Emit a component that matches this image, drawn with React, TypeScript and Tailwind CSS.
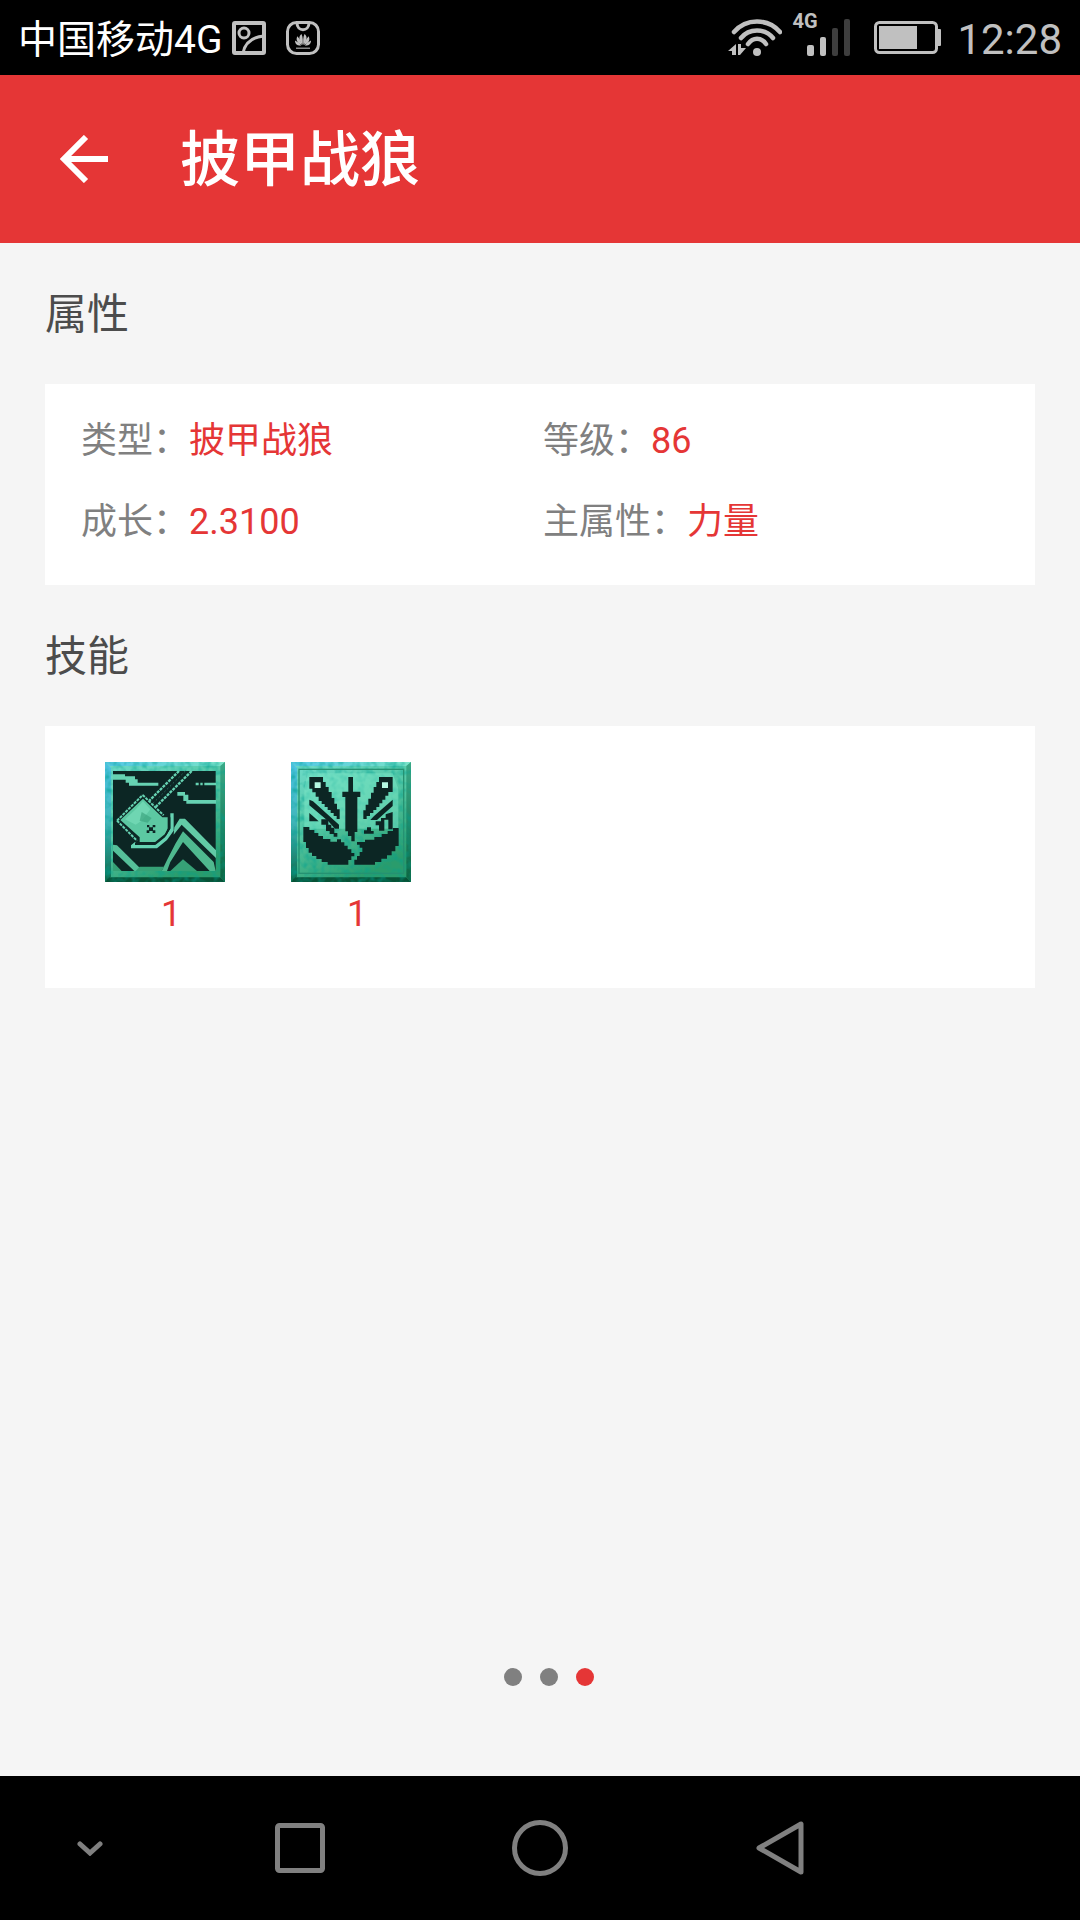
import type { ReactNode } from "react"

interface Attribute {
  label: string
  value: string
}

interface Skill {
  name: string
  level: number
  icon: ReactNode
}

const attributes: Attribute[] = [
  { label: "类型：", value: "披甲战狼" },
  { label: "等级：", value: "86" },
  { label: "成长：", value: "2.3100" },
  { label: "主属性：", value: "力量" },
]

const skills: Skill[] = [
  { name: "skill-axe", level: 1, icon: <AxeIcon /> },
  { name: "skill-blades", level: 1, icon: <BladesIcon /> },
]

const pages = [1, 2, 3]

// Stone tile behind every skill drawing: lit from the top left, bevelled edges
function StoneTile({ id }: { id: string }) {
  return (
    <>
      <defs>
        <linearGradient id={`${id}-face`} x1="0" y1="0" x2="0.5" y2="1">
          <stop offset="0" stopColor="#6fdccb" />
          <stop offset="0.5" stopColor="#55c8a5" />
          <stop offset="1" stopColor="#2a9c6c" />
        </linearGradient>
        <linearGradient id={`${id}-left`} x1="0" y1="0" x2="0" y2="1">
          <stop offset="0" stopColor="#55c6ea" />
          <stop offset="0.5" stopColor="#3fb5b8" />
          <stop offset="1" stopColor="#0c6848" />
        </linearGradient>
        <linearGradient id={`${id}-top`} x1="0" y1="0" x2="1" y2="0">
          <stop offset="0" stopColor="#56c8e6" />
          <stop offset="1" stopColor="#7be3c8" />
        </linearGradient>
        <linearGradient id={`${id}-right`} x1="0" y1="0" x2="0" y2="1">
          <stop offset="0" stopColor="#3aa987" />
          <stop offset="1" stopColor="#0b6542" />
        </linearGradient>
        <filter id={`${id}-grain`} x="0" y="0" width="1" height="1">
          <feTurbulence type="fractalNoise" baseFrequency="0.05" numOctaves="2" seed="4" />
          <feColorMatrix values="0 0 0 0 0  0 0 0 0 0.35  0 0 0 0 0.28  0 1.2 0 0 -0.48" />
        </filter>
      </defs>
      <rect width="360" height="360" fill={`url(#${id}-face)`} />
      <path d="M0 0 L18 18 V344 L0 360 Z" fill={`url(#${id}-left)`} />
      <path d="M0 0 H360 L346 12 H14 Z" fill={`url(#${id}-top)`} />
      <path d="M360 0 V360 L346 344 V12 Z" fill={`url(#${id}-right)`} />
      <path d="M0 360 L12 346 H346 L360 360 Z" fill="#075236" />
      <rect width="360" height="360" filter={`url(#${id}-grain)`} />
    </>
  )
}

function AxeIcon() {
  return (
    <svg className="block size-[120px]" viewBox="0 0 360 360" aria-hidden="true">
      <StoneTile id="axe" />
      <rect x="24" y="27" width="308" height="300" fill="#0c2624" />
      <g fill="#66d2b2">
        <path d="M24 37 H60 V43 H90 V52 H98 V62 H160 V71 H72 V62 H62 V53 H24 Z" />
        <path d="M217 90 H240 V98 H250 V114 H333 V125 H244 V117 H235 V101 H217 Z" />
        <path d="M272 62 h9 v8 h-9z M286 62 h7 v8 h-7z M298 62 H333 V70 H298 Z" />
      </g>
      {/* handle */}
      <path d="M260 27 L152 135" stroke="#66d2b2" strokeWidth="7" strokeDasharray="9 3" />
      <path d="M222 27 L133 116" stroke="#66d2b2" strokeWidth="7" strokeDasharray="9 3" />
      <path d="M241 27 L140 128" stroke="#2b6a5c" strokeWidth="3" strokeDasharray="5 7" />
      {/* head */}
      <path d="M36 176 L113 99" stroke="#66d2b2" strokeWidth="6" strokeDasharray="9 3" />
      <path d="M36 176 L96 236" stroke="#66d2b2" strokeWidth="6" strokeDasharray="9 3" />
      <path d="M113 99 L176 160" stroke="#66d2b2" strokeWidth="6" strokeDasharray="9 3" />
      <path d="M46 174 L114 110 L172 166 H188 V200 L178 222 L156 240 H104 V226 Z" fill="#5cc8a2" />
      <path d="M60 172 L90 144 L114 118 L136 142 L110 176 L92 188 Z" fill="#7be0bd" opacity="0.6" />
      <path d="M110 150 L140 168 L128 182 L104 176 Z" fill="#3da580" opacity="0.7" />
      <path d="M78 250 V259 H156 L186 234 L206 206 V154 H196 V200 L180 226 L152 248 H96 L90 240 Z" fill="#66d2b2" />
      <path d="M90 246 H148 L182 218 L193 198 V166" fill="none" stroke="#0c2624" strokeWidth="6" />
      <path
        d="M126 189 h7 v7 h10 v-7 h8 v7 h-7 v9 h7 v8 h-8 v-6 h-10 v6 h-8 v-8 h7 v-9 h-6z"
        fill="#0c2624"
      />
      {/* mountains */}
      <path d="M208 196 L224 170 H240 L333 265 V288 L230 188 L206 218 Z" fill="#62cba6" />
      <path d="M170 327 L188 290 L212 244 L234 208 L326 300 L332 327 H314 L234 240 L196 300 L186 327 Z" fill="#4fb98f" />
      <path d="M196 327 L234 292 L276 327 Z" fill="#36a176" />
      <path d="M24 248 L36 250 L114 327 H88 L24 266 Z" fill="#55bf99" />
      <path d="M24 300 L50 327 H24 Z" fill="#36a176" />
      <path d="M92 327 L104 314 H178 L170 327 Z" fill="#36a176" />
    </svg>
  )
}

function BladesIcon() {
  return (
    <svg className="block size-[120px]" viewBox="0 0 360 360" aria-hidden="true">
      <StoneTile id="blades" />
      <rect x="24" y="22" width="314" height="312" fill="none" stroke="#259272" strokeWidth="4" />
      <path d="M50 34 H305 L322 80 V200 H40 V80 Z" fill="#7ce8c8" opacity="0.5" />
      <g fill="#0c2624">
        {/* centre sword */}
        <path d="M172 45 H186 V89 H208 V105 H199 V210 H191 V238 H181 V222 H171 V208 H163 V105 H154 V89 H172 Z" />
        {/* fanned knives */}
        <path d="M55 45 H96 V60 H104 V75 H113 V90 H122 V108 H130 V125 H138 V142 H146 V171 H137 V162 H128 V153 H119 V144 H110 V135 H101 V126 H92 V117 H83 V104 H74 V91 H64 V80 H55 Z" />
        <path d="M305 45 H264 V60 H256 V75 H248 V92 H240 V110 H232 V128 H224 V145 H217 V171 H227 V162 H237 V153 H247 V144 H256 V135 H265 V124 H274 V113 H283 V101 H292 V90 H305 Z" />
        <path d="M55 113 L66 118 L144 188 V200 L132 200 L112 178 L55 130 Z" />
        <path d="M55 153 L68 164 L83 178 H55 Z" />
        <path d="M91 172 H112 V188 H121 V197 H130 V213 H139 V224 H128 V216 H116 V207 H105 V188 H91 Z" />
        <path d="M305 113 V132 L258 174 H238 L250 161 Z" />
        <path d="M305 150 V202 H292 V173 H280 V206 H264 V190 H254 V178 H270 V168 H284 V157 Z" />
        <path d="M219 215 V205 H228 V196 H240 V207 H248 V215 Z" />
        {/* cracked bowl */}
        <path d="M37 195 H55 V204 H70 V213 H82 V222 H96 V231 H118 V239 H138 V232 H150 V241 H160 V251 H170 V262 H181 V273 H190 V283 H181 V294 H172 V308 H110 V300 H92 V291 H76 V282 H63 V272 H53 V258 H45 V240 H37 Z" />
        <path d="M323 198 H306 V207 H290 V216 H272 V225 H250 V233 H222 V240 H198 V248 H206 V257 H214 V270 H206 V282 H198 V293 H190 V308 H252 V300 H271 V290 H288 V280 H302 V268 H313 V252 H323 Z" />
      </g>
      <path d="M71 61 H89 V78 H71 Z M273 61 H291 V78 H273 Z" fill="#b4f8e2" />
    </svg>
  )
}

function StatusBar() {
  return (
    <div className="flex h-[75px] items-center justify-between bg-black pl-[18px] pr-[18px] text-[#c0c0c0]">
      <div className="flex items-center">
        <span className="pt-1 text-[39px] leading-[48px] text-white">中国移动4G</span>
        <svg className="ml-[10px] size-[34px]" viewBox="0 0 34 34" fill="none" stroke="currentColor" strokeWidth="4">
          <rect x="2" y="2" width="30" height="30" rx="1" />
          <circle cx="12" cy="12" r="5" strokeWidth="3" />
          <path d="M11 32 C13 22 20 16 32 15" strokeWidth="3" />
        </svg>
        <svg className="ml-5 size-[34px]" viewBox="0 0 34 34" fill="none" stroke="currentColor">
          <rect x="1.5" y="1.5" width="31" height="31" rx="9" strokeWidth="3" />
          <path d="M11 2 C11 11 23 11 23 2" strokeWidth="3" />
          <g fill="currentColor" stroke="none">
            <path d="M16.6 24 C12 18 13 15 15.5 13 C17 16 17 20 16.6 24Z M17.4 24 C22 18 21 15 18.5 13 C17 16 17 20 17.4 24Z" />
            <path d="M15.8 24.2 C10 21 10 18 11.4 15.2 C14 18 15.5 21 15.8 24.2Z M18.2 24.2 C24 21 24 18 22.6 15.2 C20 18 18.5 21 18.2 24.2Z" />
            <path d="M15 24.8 C10 24.5 9 22 9 19.5 C12 21 14 22.5 15 24.8Z M19 24.8 C24 24.5 25 22 25 19.5 C22 21 20 22.5 19 24.8Z" />
            <path d="M10 26.5 H24 V28 H10 Z" opacity="0.7" />
          </g>
        </svg>
      </div>
      <div className="flex items-center">
        <svg className="h-[38px] w-[54px]" viewBox="0 0 54 38" fill="none" stroke="currentColor" strokeWidth="4.5" strokeLinecap="round">
          <path d="M6 13 C18 -1 40 -1 52 13" />
          <path d="M13 19 C21 9 37 9 45 19" />
          <path d="M20 25 C25 18 33 18 38 25" />
          <circle cx="29" cy="33" r="4" fill="currentColor" stroke="none" />
          <path d="M8 25 V36 H4 V32 H0 Z M10 25 H13 V29 H18 L12 36 H10 Z" fill="currentColor" stroke="none" />
        </svg>
        <div className="relative ml-[25px] h-[38px] w-[43px]">
          <span className="absolute -left-[15px] -top-2 text-[20px] font-bold leading-[20px]">4G</span>
          <svg className="size-full" viewBox="0 0 43 38">
            <rect x="0" y="26" width="7" height="11" rx="2" fill="#c0c0c0" />
            <rect x="13" y="18" width="6" height="19" rx="2" fill="#c0c0c0" />
            <rect x="25" y="9" width="6" height="28" rx="2" fill="#3e3e3e" />
            <rect x="37" y="0" width="6" height="37" rx="2" fill="#3e3e3e" />
          </svg>
        </div>
        <svg className="ml-6 h-[34px] w-[67px]" viewBox="0 0 67 34">
          <rect x="1.5" y="1.5" width="61" height="30" rx="4" fill="none" stroke="currentColor" strokeWidth="3" />
          <rect x="5" y="5" width="38" height="23" fill="currentColor" />
          <rect x="63" y="8" width="4" height="17" rx="1" fill="currentColor" />
        </svg>
        <span className="ml-4 pt-1 text-[42px] leading-[48px]">12:28</span>
      </div>
    </div>
  )
}

function SectionTitle({ children }: { children: ReactNode }) {
  return <h2 className="pb-[39px] pt-[42px] text-[42px] leading-[60px] text-[#4c4c4c]">{children}</h2>
}

function NavigationBar() {
  return (
    <nav className="grid h-36 grid-cols-[3fr_4fr_4fr_4fr_3fr] bg-black text-[#808080]">
      <button type="button" aria-label="hide" className="flex items-center justify-center">
        <svg className="h-4 w-[26px]" viewBox="0 0 26 16" fill="none" stroke="currentColor" strokeWidth="5" strokeLinecap="round">
          <path d="M3 4 L13 13 L23 4" />
        </svg>
      </button>
      <button type="button" aria-label="recent" className="flex items-center justify-center">
        <svg className="size-[50px]" viewBox="0 0 50 50" fill="none" stroke="currentColor" strokeWidth="5">
          <rect x="2.5" y="2.5" width="45" height="45" rx="2" />
        </svg>
      </button>
      <button type="button" aria-label="home" className="flex items-center justify-center">
        <svg className="size-14" viewBox="0 0 56 56" fill="none" stroke="currentColor" strokeWidth="5">
          <circle cx="28" cy="28" r="25.5" />
        </svg>
      </button>
      <button type="button" aria-label="back" className="flex items-center justify-center">
        <svg className="h-[54px] w-12" viewBox="0 0 48 54" fill="none" stroke="currentColor" strokeWidth="5" strokeLinejoin="round">
          <path d="M45 3 V51 L3 27 Z" />
        </svg>
      </button>
    </nav>
  )
}

export default function App() {
  return (
    <div className="flex min-h-screen flex-col bg-[#f5f5f5] font-[Roboto,'Noto_Sans_CJK_SC',sans-serif]" lang="zh-CN">
      <StatusBar />

      <header className="flex h-[168px] items-center bg-[#e53636] pl-[60px] text-white">
        <button type="button" aria-label="返回">
          <svg className="block size-12" viewBox="0 0 48 48" fill="none" stroke="currentColor" strokeWidth="6">
            <path d="M26 2 L4 24 L26 46 M4 24 H48" />
          </svg>
        </button>
        <h1 className="ml-[72px] pt-1 text-[60px] font-medium leading-[72px]">披甲战狼</h1>
      </header>

      <main className="flex flex-1 flex-col px-[45px]">
        <section>
          <SectionTitle>属性</SectionTitle>
          <dl className="grid grid-cols-2 gap-y-[33px] bg-white pb-[39px] pl-9 pr-[30px] pt-[33px] text-[36px] leading-[48px]">
            {attributes.map((item) => (
              <div key={item.label} className="flex">
                <dt className="text-[#808080]">{item.label}</dt>
                <dd className="text-[#e53636]">{item.value}</dd>
              </div>
            ))}
          </dl>
        </section>

        <section>
          <SectionTitle>技能</SectionTitle>
          <ul className="flex gap-[66px] bg-white px-[60px] pb-[50px] pt-9">
            {skills.map((skill) => (
              <li key={skill.name}>
                {skill.icon}
                <p className="pl-3 pt-2 text-center text-[36px] leading-[48px] text-[#e53636]">{skill.level}</p>
              </li>
            ))}
          </ul>
        </section>

        <div className="mt-auto flex justify-center pb-[90px]">
          {pages.map((page) => (
            <span
              key={page}
              className={`ml-[18px] size-[18px] rounded-full ${page === pages.length ? "bg-[#e53636]" : "bg-[#808080]"}`}
            />
          ))}
        </div>
      </main>

      <NavigationBar />
    </div>
  )
}
